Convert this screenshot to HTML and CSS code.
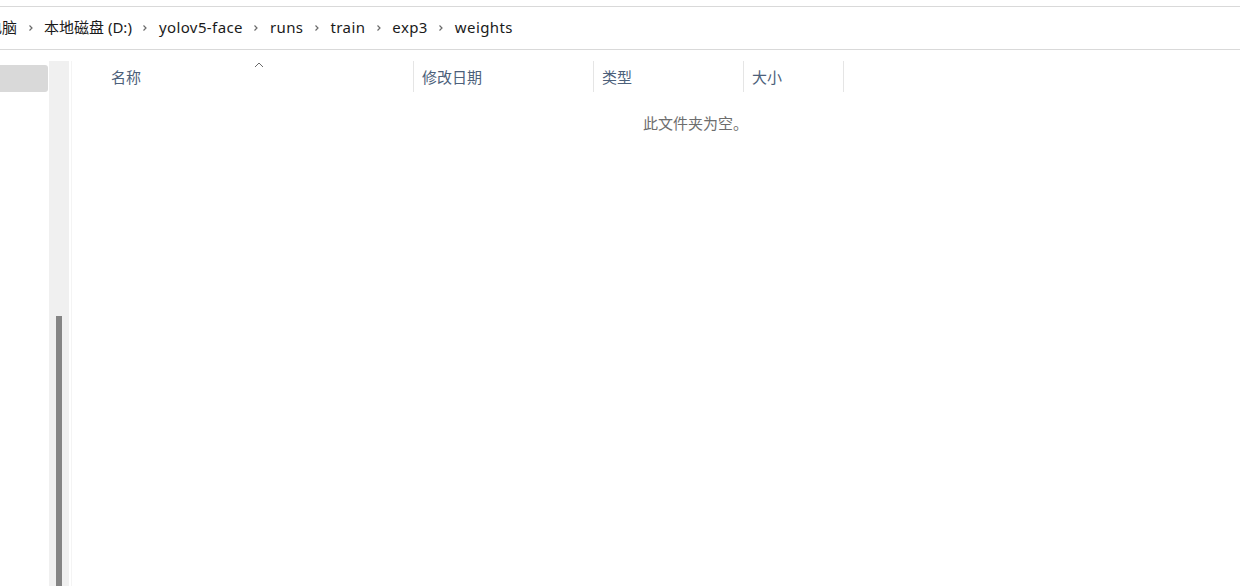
FILE: index.html
```html
<!DOCTYPE html>
<html lang="zh">
<head>
<meta charset="utf-8">
<link rel="stylesheet" href="styles.css">
</head>
<body>
<div class="addressbar">
  <div class="crumbs">
    <span class="crumb first">此电脑</span>
    <span class="chev"><svg width="8" height="10" viewBox="0 0 8 10"><path d="M2.5 2.5 L5 5 L2.5 7.5" fill="none" stroke="#6a6a6a" stroke-width="1.2"/></svg></span>
    <span class="crumb">本地磁盘 (D:)</span>
    <span class="chev"><svg width="8" height="10" viewBox="0 0 8 10"><path d="M2.5 2.5 L5 5 L2.5 7.5" fill="none" stroke="#6a6a6a" stroke-width="1.2"/></svg></span>
    <span class="crumb latin">yolov5-face</span>
    <span class="chev"><svg width="8" height="10" viewBox="0 0 8 10"><path d="M2.5 2.5 L5 5 L2.5 7.5" fill="none" stroke="#6a6a6a" stroke-width="1.2"/></svg></span>
    <span class="crumb latin">runs</span>
    <span class="chev"><svg width="8" height="10" viewBox="0 0 8 10"><path d="M2.5 2.5 L5 5 L2.5 7.5" fill="none" stroke="#6a6a6a" stroke-width="1.2"/></svg></span>
    <span class="crumb latin">train</span>
    <span class="chev"><svg width="8" height="10" viewBox="0 0 8 10"><path d="M2.5 2.5 L5 5 L2.5 7.5" fill="none" stroke="#6a6a6a" stroke-width="1.2"/></svg></span>
    <span class="crumb latin">exp3</span>
    <span class="chev"><svg width="8" height="10" viewBox="0 0 8 10"><path d="M2.5 2.5 L5 5 L2.5 7.5" fill="none" stroke="#6a6a6a" stroke-width="1.2"/></svg></span>
    <span class="crumb latin">weights</span>
  </div>
</div>
<div class="main">
  <div class="nav">
    <div class="nav-list">
      <div class="nav-item selected"></div>
    </div>
    <div class="scrolltrack">
      <div class="scrollthumb"></div>
    </div>
  </div>
  <div class="divider"></div>
  <div class="content">
    <div class="header">
      <div class="col col-name">名称
        <svg class="sort" width="10" height="6" viewBox="0 0 10 6"><path d="M1 5 L5 1 L9 5" fill="none" stroke="#6a6a6a" stroke-width="1"/></svg>
      </div>
      <div class="col col-date">修改日期</div>
      <div class="col col-type">类型</div>
      <div class="col col-size">大小</div>
    </div>
    <div class="empty">此文件夹为空。</div>
  </div>
</div>
</body>
</html>
```
FILE: styles.css
```css
html, body {
  margin: 0;
  padding: 0;
  background: #ffffff;
  height: 100%;
  overflow: hidden;
}
body {
  font-family: "Noto Sans CJK SC", "Noto Sans", sans-serif;
  font-size: 15px;
}
.addressbar {
  margin-top: 6px;
  height: 42px;
  border-top: 1px solid #d9d9d9;
  border-bottom: 1px solid #d9d9d9;
  display: flex;
  align-items: center;
}
.crumbs {
  display: flex;
  align-items: center;
  color: #1a1a1a;
  margin-left: -28px;
  margin-top: -2px;
  font-family: "Noto Sans", "Noto Sans CJK SC", sans-serif;
}
.crumb {
  line-height: 20px;
}
.crumb.latin {
  letter-spacing: 0.4px;
}
.chev {
  display: flex;
  width: 27px;
  justify-content: center;
  align-items: center;
  margin-top: 2px;
}
.main {
  display: flex;
  height: 536px;
}
.nav {
  display: flex;
  width: 69px;
}
.nav-list {
  width: 49px;
  padding-top: 15px;
}
.nav-item.selected {
  width: 48px;
  height: 27px;
  background: #d9d9d9;
  border-radius: 0 3px 3px 0;
}
.scrolltrack {
  width: 20px;
  margin-top: 11px;
  background: #f0f0f0;
  display: flex;
  flex-direction: column;
  align-items: center;
  padding-top: 255px;
  box-sizing: border-box;
}
.scrollthumb {
  width: 6px;
  flex: 1;
  background: #858585;
}
.divider {
  width: 1px;
  margin-left: 2px;
  margin-top: 11px;
  background: #f4f4f4;
}
.content {
  flex: 1;
  padding-top: 11px;
}
.header {
  display: flex;
  height: 31px;
  margin-left: 31px;
  color: #4c607a;
}
.col {
  display: flex;
  align-items: center;
  box-sizing: border-box;
  padding-left: 8px;
  border-right: 1px solid #e5e5e5;
  position: relative;
}
.col-name { width: 311px; }
.col-date { width: 180px; }
.col-type { width: 150px; }
.col-size { width: 100px; }
.sort {
  position: absolute;
  left: 151px;
  top: 1px;
}
.empty {
  margin-top: 21px;
  padding-left: 571px;
  color: #6d6d6d;
  line-height: 20px;
}
```
